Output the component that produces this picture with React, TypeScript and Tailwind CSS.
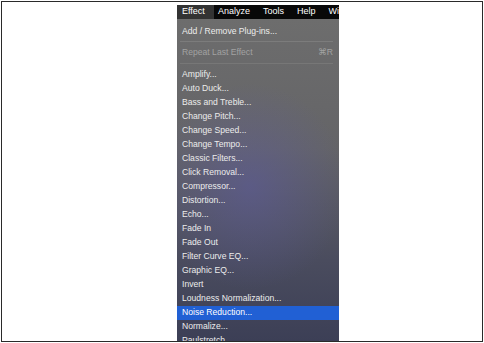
const items = [
  "Amplify...",
  "Auto Duck...",
  "Bass and Treble...",
  "Change Pitch...",
  "Change Speed...",
  "Change Tempo...",
  "Classic Filters...",
  "Click Removal...",
  "Compressor...",
  "Distortion...",
  "Echo...",
  "Fade In",
  "Fade Out",
  "Filter Curve EQ...",
  "Graphic EQ...",
  "Invert",
  "Loudness Normalization...",
  "Noise Reduction...",
  "Normalize...",
  "Paulstretch...",
];

const menus = ["Analyze", "Tools", "Help", "Window"];

export default function App() {
  return (
    <div className="w-[484px] h-[343px] bg-white p-px font-['Liberation_Sans',Arial,sans-serif]">
      <div className="h-full border border-[#2a2a2a] pl-[175px] pt-[3px] flex">
        <div className="w-[162px] flex flex-col overflow-hidden">
          {/* Menu bar */}
          <div className="h-[14px] shrink-0 bg-[#080808] flex items-center text-[9px] text-white overflow-hidden whitespace-nowrap">
            <div className="h-full w-[37px] shrink-0 bg-[#333333] flex items-center pl-[5px]">
              Effect
            </div>
            <div className="flex items-center gap-[13px] pl-[4px]">
              {menus.map((m) => (
                <span key={m}>{m}</span>
              ))}
            </div>
          </div>

          {/* Dropdown */}
          <div className="flex-1 overflow-hidden pt-[5px] text-[8.6px] text-[#ececec] bg-[radial-gradient(ellipse_60%_32%_at_45%_52%,rgba(92,90,160,0.55),transparent),linear-gradient(to_bottom,#6d6d6d,#646467_40%,#4a4c5e_75%,#3c3f56)]">
            <div className="h-[14px] flex items-center pl-[5px]">
              Add / Remove Plug-ins...
            </div>
            <div className="h-[7px] flex items-center pl-[3px] pr-[6px]">
              <div className="h-px w-full bg-[#7c7c7c]" />
            </div>
            <div className="h-[14px] flex items-center justify-between pl-[5px] pr-[6px] text-[#a2a2a2]">
              <span>Repeat Last Effect</span>
              <span>⌘R</span>
            </div>
            <div className="h-[8px] flex items-center pl-[3px] pr-[6px]">
              <div className="h-px w-full bg-[#777777]" />
            </div>
            {items.map((item) => (
              <div
                key={item}
                className={
                  item === "Noise Reduction..."
                    ? "h-[14.06px] flex items-center pl-[5px] bg-[#2160d4] text-white"
                    : "h-[14.06px] flex items-center pl-[5px]"
                }
              >
                {item}
              </div>
            ))}
          </div>
        </div>
      </div>
    </div>
  );
}
